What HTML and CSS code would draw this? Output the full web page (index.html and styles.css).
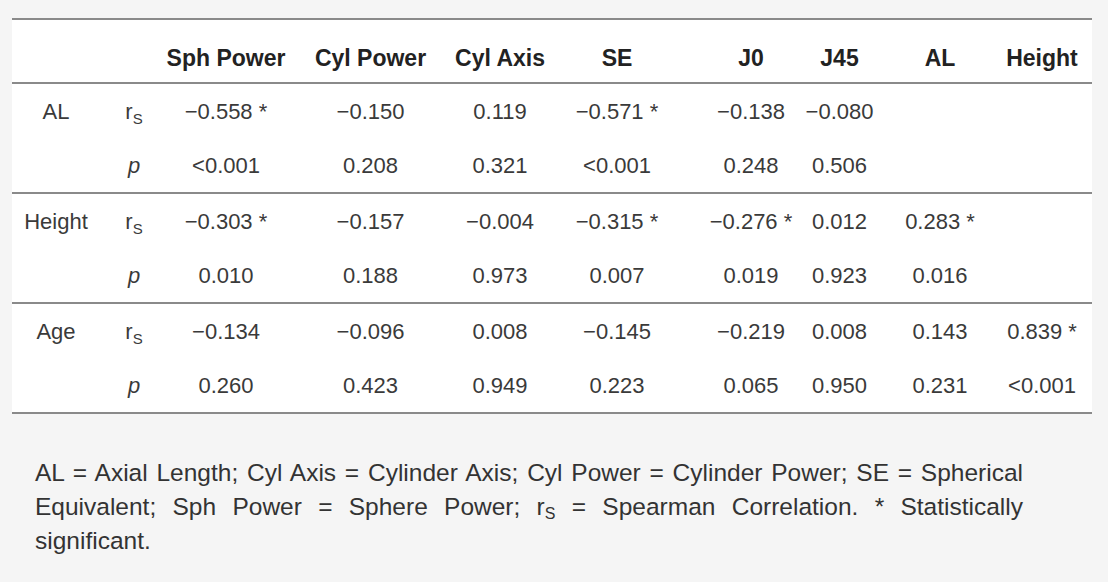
FILE: index.html
```html
<!DOCTYPE html>
<html lang="en">
<head>
<meta charset="utf-8">
<title>Spearman correlation table</title>
<link rel="stylesheet" href="styles.css">
</head>
<body>
<div class="page">
  <div class="table">
    <div class="grid thead">
      <div class="cell"></div>
      <div class="cell"></div>
      <div class="cell"><span>Sph Power</span></div>
      <div class="cell"><span>Cyl Power</span></div>
      <div class="cell"><span>Cyl Axis</span></div>
      <div class="cell"><span>SE</span></div>
      <div class="cell"><span>J0</span></div>
      <div class="cell"><span>J45</span></div>
      <div class="cell"><span>AL</span></div>
      <div class="cell"><span>Height</span></div>
    </div>

    <div class="grid group">
      <div class="cell"><span>AL</span></div>
      <div class="cell"><span class="stat">r<sub>S</sub></span></div>
      <div class="cell"><span>−0.558 *</span></div>
      <div class="cell"><span>−0.150</span></div>
      <div class="cell"><span>0.119</span></div>
      <div class="cell"><span>−0.571 *</span></div>
      <div class="cell"><span>−0.138</span></div>
      <div class="cell"><span>−0.080</span></div>
      <div class="cell"></div>
      <div class="cell"></div>

      <div class="cell"></div>
      <div class="cell"><span class="stat p">p</span></div>
      <div class="cell"><span>&lt;0.001</span></div>
      <div class="cell"><span>0.208</span></div>
      <div class="cell"><span>0.321</span></div>
      <div class="cell"><span>&lt;0.001</span></div>
      <div class="cell"><span>0.248</span></div>
      <div class="cell"><span>0.506</span></div>
      <div class="cell"></div>
      <div class="cell"></div>
    </div>

    <div class="grid group">
      <div class="cell"><span>Height</span></div>
      <div class="cell"><span class="stat">r<sub>S</sub></span></div>
      <div class="cell"><span>−0.303 *</span></div>
      <div class="cell"><span>−0.157</span></div>
      <div class="cell"><span>−0.004</span></div>
      <div class="cell"><span>−0.315 *</span></div>
      <div class="cell"><span>−0.276 *</span></div>
      <div class="cell"><span>0.012</span></div>
      <div class="cell"><span>0.283 *</span></div>
      <div class="cell"></div>

      <div class="cell"></div>
      <div class="cell"><span class="stat p">p</span></div>
      <div class="cell"><span>0.010</span></div>
      <div class="cell"><span>0.188</span></div>
      <div class="cell"><span>0.973</span></div>
      <div class="cell"><span>0.007</span></div>
      <div class="cell"><span>0.019</span></div>
      <div class="cell"><span>0.923</span></div>
      <div class="cell"><span>0.016</span></div>
      <div class="cell"></div>
    </div>

    <div class="grid group">
      <div class="cell"><span>Age</span></div>
      <div class="cell"><span class="stat">r<sub>S</sub></span></div>
      <div class="cell"><span>−0.134</span></div>
      <div class="cell"><span>−0.096</span></div>
      <div class="cell"><span>0.008</span></div>
      <div class="cell"><span>−0.145</span></div>
      <div class="cell"><span>−0.219</span></div>
      <div class="cell"><span>0.008</span></div>
      <div class="cell"><span>0.143</span></div>
      <div class="cell"><span>0.839 *</span></div>

      <div class="cell"></div>
      <div class="cell"><span class="stat p">p</span></div>
      <div class="cell"><span>0.260</span></div>
      <div class="cell"><span>0.423</span></div>
      <div class="cell"><span>0.949</span></div>
      <div class="cell"><span>0.223</span></div>
      <div class="cell"><span>0.065</span></div>
      <div class="cell"><span>0.950</span></div>
      <div class="cell"><span>0.231</span></div>
      <div class="cell"><span>&lt;0.001</span></div>
    </div>
  </div>

  <p class="note">AL = Axial Length; Cyl Axis = Cylinder Axis; Cyl Power = Cylinder Power; SE = Spherical Equivalent; Sph Power = Sphere Power; r<sub>S</sub> = Spearman Correlation. * Statistically significant.</p>
</div>
</body>
</html>
```

FILE: styles.css
```css
html, body {
  margin: 0;
  padding: 0;
}

body {
  background: #f5f5f5;
  font-family: "Liberation Sans", Arial, sans-serif;
  color: #3a3a3a;
}

.page {
  padding: 18px 0 0 12px;
}

.table {
  width: 1080px;
  background: #ffffff;
  border-top: 2px solid #8a8a8a;
}

.grid {
  display: grid;
  grid-template-columns: 88px 68px 116px 173px 86px 148px 120px 57px 144px 60px;
  border-bottom: 2px solid #8a8a8a;
}

.cell {
  display: flex;
  justify-content: center;
  align-items: center;
  white-space: nowrap;
}

.thead .cell {
  height: 62px;
  align-items: flex-start;
  padding-top: 24px;
  box-sizing: border-box;
  font-size: 23px;
  line-height: 28px;
  font-weight: bold;
  color: #222222;
}

.group {
  grid-auto-rows: 54px;
}

.group .cell {
  font-size: 22px;
  line-height: 28px;
  padding-top: 2px;
  box-sizing: border-box;
}

.stat sub {
  font-size: 15px;
  vertical-align: -5px;
  line-height: 0;
}

.stat.p {
  font-style: italic;
}

.note {
  margin: 42px 0 0 23px;
  width: 988px;
  font-size: 24.5px;
  line-height: 34px;
  text-align: justify;
  color: #333333;
}

.note sub {
  font-size: 16px;
  vertical-align: -4px;
  line-height: 0;
}
```
